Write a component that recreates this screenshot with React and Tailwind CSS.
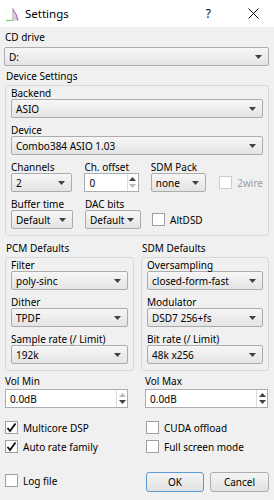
import React from 'react'

const font = { fontFamily: '"Noto Sans", "Segoe UI", sans-serif' }

function Arrow({ up = false, light = false }) {
  return (
    <svg width="7" height="4" viewBox="0 0 7 4" className="block">
      <path d={up ? 'M0 4 L3.5 0 L7 4 Z' : 'M0 0 L7 0 L3.5 4 Z'} fill={light ? '#b8b8b8' : '#404040'} />
    </svg>
  )
}

function Label({ children, className = '' }) {
  return <div className={`h-[12px] leading-[12px] text-[10px] text-black whitespace-nowrap ${className}`}>{children}</div>
}

function Combo({ value, className = '' }) {
  return (
    <div className={`h-[19px] flex items-center justify-between pl-[4px] pr-[6px] border border-[#acacac] rounded-[2px] bg-gradient-to-b from-[#f6f6f6] to-[#e4e4e4] text-[10px] text-black whitespace-nowrap ${className}`}>
      <span className="leading-none">{value}</span>
      <Arrow />
    </div>
  )
}

function Spin({ value, upLight = false, downLight = false, className = '' }) {
  return (
    <div className={`h-[19px] flex items-stretch border border-[#abadb3] bg-white text-[10px] text-black ${className}`}>
      <div className="flex-1 flex items-center pl-[4px] leading-none">{value}</div>
      <div className="w-[11px] flex flex-col items-center justify-center gap-[3px] border-l border-[#dcdcdc]">
        <Arrow up light={upLight} />
        <Arrow light={downLight} />
      </div>
    </div>
  )
}

function Check({ label, checked = false, disabled = false, className = '' }) {
  return (
    <div className={`flex items-center gap-[5px] text-[10px] whitespace-nowrap ${disabled ? 'text-[#a0a0a0]' : 'text-black'} ${className}`}>
      <div className={`w-[13px] h-[13px] border bg-white flex items-center justify-center ${disabled ? 'border-[#cccccc]' : 'border-[#a0a0a0]'}`}>
        {checked && (
          <svg width="11" height="11" viewBox="0 0 11 11">
            <path d="M1.5 6 L4 9 L9.5 1.5" fill="none" stroke="#111" strokeWidth="1.9" />
          </svg>
        )}
      </div>
      <span className="leading-none">{label}</span>
    </div>
  )
}

function Group({ title, children, className = '' }) {
  return (
    <div className={className}>
      <Label className="pl-[1px]">{title}</Label>
      <div className="mt-[3px] border border-[#d9d9d9] rounded-[3px] px-[5px] pb-[6px]">{children}</div>
    </div>
  )
}

function Field({ label, value, className = '' }) {
  return (
    <div className={className}>
      <Label>{label}</Label>
      <Combo value={value} />
    </div>
  )
}

export default function App() {
  return (
    <div className="w-[274px] h-[500px] bg-[#f0f0f0] overflow-hidden" style={font}>
      <div className="h-[27px] bg-white flex items-center pl-[5px]">
        <svg width="16" height="16" viewBox="0 0 16 16">
          <path d="M1 14.5 L8 14.5" stroke="#7fd27f" strokeWidth="1.2" />
          <path d="M8 2 L8 14.5" stroke="#8aa08a" strokeWidth="1" />
          <path d="M8 4 Q12 8 13 14.5 L8 14.5 Z" fill="#e6c2ea" />
          <path d="M8 4 Q12 8 13 14.5" fill="none" stroke="#a24fb0" strokeWidth="1" />
        </svg>
        <span className="ml-[4px] text-[11.5px] text-black leading-none">Settings</span>
        <span className="ml-auto text-[12px] text-black leading-none mr-[37px]">?</span>
        <svg width="11" height="11" viewBox="0 0 11 11" className="mr-[15px]">
          <path d="M0.5 0.5 L10.5 10.5 M10.5 0.5 L0.5 10.5" stroke="#111" strokeWidth="1" />
        </svg>
      </div>

      <div className="pl-[4px] pr-[5px] pt-[3px]">
        <Label className="h-[15px] leading-[15px] pl-[1px]">CD drive</Label>
        <Combo value="D:" className="mt-[2px]" />

        <Group title="Device Settings" className="mt-[4px] ml-[1px]">
          <Field label="Backend" value="ASIO" className="pt-[1px]" />
          <Field label="Device" value="Combo384 ASIO 1.03" className="mt-[6px]" />
          <div className="mt-[6px] flex gap-[12px] items-end">
            <Field label="Channels" value="2" className="w-[62px]" />
            <div className="w-[55px]">
              <Label>Ch. offset</Label>
              <Spin value="0" downLight />
            </div>
            <Field label="SDM Pack" value="none" className="w-[56px]" />
            <Check label="2wire" disabled className="h-[19px] ml-[1px] gap-[4px]" />
          </div>
          <div className="mt-[6px] flex gap-[12px] items-end">
            <Field label="Buffer time" value="Default" className="w-[62px]" />
            <Field label="DAC bits" value="Default" className="w-[56px]" />
            <Check label="AltDSD" className="h-[19px] ml-[-1px]" />
          </div>
        </Group>

        <div className="mt-[6px] ml-[1px] flex gap-[7px]">
          <Group title="PCM Defaults" className="w-[129px]">
            <Field label="Filter" value="poly-sinc" className="pt-[1px]" />
            <Field label="Dither" value="TPDF" className="mt-[6px]" />
            <Field label="Sample rate (/ Limit)" value="192k" className="mt-[6px]" />
          </Group>
          <Group title="SDM Defaults" className="flex-1">
            <Field label="Oversampling" value="closed-form-fast" className="pt-[1px]" />
            <Field label="Modulator" value="DSD7 256+fs" className="mt-[6px]" />
            <Field label="Bit rate (/ Limit)" value="48k x256" className="mt-[6px]" />
          </Group>
        </div>

        <div className="mt-[4px] ml-[1px] flex">
          <div className="w-[123px]">
            <Label>Vol Min</Label>
            <Spin value="0.0dB" upLight className="mt-[2px]" />
          </div>
          <div className="w-[123px] ml-[17px]">
            <Label>Vol Max</Label>
            <Spin value="0.0dB" className="mt-[2px]" />
          </div>
        </div>

        <div className="mt-[10px] ml-[1px] grid grid-cols-[141px_1fr]">
          <Check label="Multicore DSP" checked className="h-[19px]" />
          <Check label="CUDA offload" className="h-[19px]" />
          <Check label="Auto rate family" checked className="h-[19px]" />
          <Check label="Full screen mode" className="h-[19px]" />
        </div>

        <div className="mt-[16px] ml-[1px] flex items-center">
          <Check label="Log file" className="w-[141px] h-[20px] mt-[-3px]" />
          <button className="w-[58px] h-[20px] border border-[#5b9bd5] rounded-[3px] bg-gradient-to-b from-[#f4f4f4] to-[#e2e2e2] text-[10px] text-black leading-none">OK</button>
          <button className="w-[59px] h-[20px] ml-[6px] border border-[#adadad] rounded-[3px] bg-gradient-to-b from-[#f4f4f4] to-[#e2e2e2] text-[10px] text-black leading-none">Cancel</button>
        </div>
      </div>
    </div>
  )
}
